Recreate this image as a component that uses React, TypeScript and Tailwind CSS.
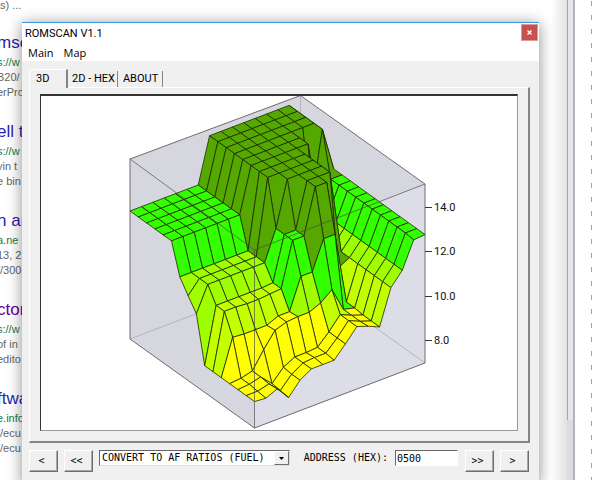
import { ReactNode } from "react";

const results = [
  { title: "msc", url: "s://w", lines: ["B20/", "erPro"], visited: false },
  { title: "ell t", url: "s://w", lines: ["yin t", "e bin"], visited: false },
  { title: "n ar", url: "a.ne", lines: ["13, 2", "//300"], visited: false },
  { title: "ctor", url: "s://w", lines: ["of in", "edito"], visited: true },
  { title: "ftwa", url: "e.info", lines: ["//ecu", "//ecu"], visited: false },
];

// Height of the surface at every grid point, one row per load line
const heights = [
  [128, 128, 128, 128, 128, 128, 128, 173, 173, 173, 173, 173, 173, 173, 173, 129],
  [128, 128, 128, 128, 128, 128, 128, 173, 173, 173, 173, 173, 173, 173, 173, 129],
  [128, 128, 128, 128, 128, 128, 128, 173, 173, 173, 173, 173, 173, 173, 173, 129],
  [128, 128, 128, 128, 128, 128, 128, 173, 173, 173, 173, 173, 173, 173, 173, 129],
  [128, 128, 128, 128, 128, 128, 128, 173, 173, 173, 173, 173, 173, 102, 173, 129],
  [128, 128, 128, 128, 128, 128, 128, 173, 173, 173, 173, 173, 173, 102, 129, 129],
  [98, 98, 98, 98, 98, 98, 98, 173, 173, 173, 173, 173, 89, 102, 129, 129],
  [85, 98, 98, 98, 98, 98, 98, 173, 173, 173, 173, 173, 89, 102, 129, 129],
  [73, 98, 98, 98, 98, 98, 98, 128, 173, 173, 173, 173, 89, 102, 129, 129],
  [27, 83, 83, 83, 83, 83, 84, 128, 128, 173, 173, 173, 89, 102, 129, 129],
  [27, 83, 83, 82, 82, 83, 84, 128, 128, 173, 173, 83, 89, 102, 129, 129],
  [27, 63, 62, 62, 62, 67, 67, 98, 98, 127, 127, 55, 89, 102, 129, 129],
  [27, 28, 31, 48, 63, 67, 68, 68, 73, 82, 58, 55, 89, 102, 129, 129],
  [27, 28, 31, 20, 32, 38, 38, 39, 50, 63, 58, 54, 89, 102, 129, 129],
  [27, 27, 30, 19, 31, 38, 39, 39, 50, 63, 58, 54, 89, 102, 129, 129],
  [27, 26, 31, 18, 31, 38, 38, 38, 50, 63, 59, 54, 89, 102, 128, 129],
];

const ticks = [
  { label: "14.0", y: 111 },
  { label: "12.0", y: 155 },
  { label: "10.0", y: 200 },
  { label: "8.0", y: 244 },
];

const project = (i: number, j: number) => [
  89 + i * 8.3 + j * 11.37,
  243 + i * 5.97 - j * 4.33 - heights[i][j],
];

const shade = (h: number) => {
  if (h > 150) return "#55a800";
  if (h > 110) return "#33ff00";
  if (h > 92) return "#9fff00";
  if (h > 75) return "#c4ff00";
  return "#ffff00";
};

function Surface() {
  const cells = [];
  for (let i = 0; i < 15; i++) {
    for (let j = 14; j >= 0; j--) {
      const corners = [[i, j], [i, j + 1], [i + 1, j + 1], [i + 1, j]];
      const top = Math.max(...corners.map(([a, b]) => heights[a][b]));
      cells.push(
        <polygon
          key={`${i}-${j}`}
          points={corners.map(([a, b]) => project(a, b).join(",")).join(" ")}
          fill={shade(top)}
        />
      );
    }
  }
  return <g stroke="#1c2a00" strokeWidth="0.8" strokeLinejoin="round">{cells}</g>;
}

function Plot() {
  return (
    <svg viewBox="0 0 476 334" className="block w-full h-auto bg-white" role="img" aria-label="3D map">
      <polygon points="89,63 259,-0.5 384,88 384,267 213.5,332 89,243" fill="#d6d6de" />
      <polygon points="213.5,154 384,88 384,267 213.5,332" fill="#dddde8" />
      <path d="M259.5 0V178M89 243L259.5 178L384 267" stroke="#b4b4b8" fill="none" />
      <path d="M89 63L259.5 -0.5L384 88V267L213.5 332L89 243Z" stroke="#6c6c70" fill="none" />
      <Surface />
      <path d="M89 63L213.5 154L384 88M213.5 154V332" stroke="#484848" strokeOpacity="0.65" fill="none" />
      {ticks.map((t) => (
        <g key={t.label}>
          <path d={`M384 ${t.y + 0.5}h7`} stroke="#333" />
          <text x="393" y={t.y + 4} fontSize="11" fontFamily="Roboto, sans-serif" fill="#111">
            {t.label}
          </text>
        </g>
      ))}
    </svg>
  );
}

function NavButton({ label, children }: { label: string; children: ReactNode }) {
  return (
    <button
      aria-label={label}
      className="w-[29px] h-[22px] shrink-0 border border-t-white border-l-white border-r-[#6e6e6e] border-b-[#6e6e6e] shadow-[inset_-1px_-1px_#a8a8a8] pr-1 text-[10px] leading-none"
    >
      {children}
    </button>
  );
}

export default function App() {
  return (
    <div className="relative h-screen overflow-hidden bg-white font-['Liberation_Sans',sans-serif]">
      <div className="flex h-full justify-between">
        <div className="-ml-[3px] w-6 whitespace-nowrap text-[11px] text-[#666]">
          <div className="h-8 pl-[3px] leading-[10px]">s) ...</div>
          {results.map((r, i) => (
            <div key={i} className="mb-[21px]">
              <a href="#" className={r.visited ? "block text-[17px] leading-[22px] text-[#609]" : "block text-[17px] leading-[22px] text-[#2a1fae]"}>
                {r.title}
              </a>
              <div className="leading-[16px] text-[#1a7a3c]">{r.url}</div>
              {r.lines.map((l, k) => (
                <div key={k} className="leading-[15px]">{l}</div>
              ))}
            </div>
          ))}
        </div>
        <div className="flex">
          <div className="w-4 bg-linear-to-r from-white to-[#e2e2e2]" />
          <div className="flex flex-col">
            <div className="h-[420px] w-[6px] border-l border-[#a6a6a8] bg-[#e6e6e8]" />
            <div className="flex-1 bg-[#dcdcde]" />
          </div>
          <div className="w-[2px] bg-[#b2b2ba]" />
          <div className="flex w-[17px] flex-col items-end gap-[9px] pt-px">
            {Array.from({ length: 35 }, (_, i) => (
              <div key={i} className="h-[5px] w-px shrink-0 bg-[#b78fc8]" />
            ))}
          </div>
        </div>
      </div>

      <div className="absolute top-[22px] right-[53px] -bottom-1 left-[22px] border-t border-[#3b98dc] bg-[#f0f0f0] text-black shadow-[0_2px_14px_rgba(0,0,0,0.45)]">
        <div className="bg-white text-[11px]">
          <div className="flex h-5 items-start justify-between pl-[3px] pr-px pt-px">
            <span className="font-['Roboto',sans-serif] leading-5">ROMSCAN V1.1</span>
            <button aria-label="Close" className="flex h-[17px] w-[17px] items-center justify-center border border-[#dc9a9a] bg-[#c75050]">
              <svg width="5" height="5" viewBox="0 0 5 5" stroke="#fff" strokeWidth="1.3">
                <path d="M0.5 0.5L4.5 4.5M4.5 0.5L0.5 4.5" />
              </svg>
            </button>
          </div>
          <div className="flex h-[18px] gap-[10px] pl-[6px] font-['Open_Sans',sans-serif]">
            <button className="leading-5">Main</button>
            <button className="leading-5">Map</button>
          </div>
        </div>

        <div className="pt-2 pr-[9px] pl-[7px]">
          <div className="flex items-end font-['Roboto',sans-serif] text-[11px]">
            <button className="relative -mb-px h-[19px] w-[39px] rounded-tl-sm border-t border-r-2 border-l border-t-white border-l-white border-r-[#848484] bg-[#f0f0f0] pl-[6px] text-left">3D</button>
            <button className="mr-1 h-[16px] border-r border-[#848484] pr-[2px] pl-1 leading-[16px]">2D - HEX</button>
            <button className="h-[16px] border-r border-[#848484] pr-1 pl-px leading-[16px]">ABOUT</button>
          </div>
          <div className="border border-t-white border-r-2 border-b-2 border-l-white border-r-[#848484] border-b-[#848484] px-[10px] pt-[6px] pb-[10px]">
            <div className="border border-t-2 border-t-[#333] border-r-[#999] border-b-[#999] border-l-[#333]">
              <Plot />
            </div>
          </div>

          <div className="flex items-start pt-[7px] pr-px font-['DejaVu_Sans_Mono',monospace] text-[10px]">
            <div className="flex gap-[6px]">
              <NavButton label="Back one">&lt;</NavButton>
              <NavButton label="Back one page">&lt;&lt;</NavButton>
            </div>
            <div className="relative mx-[6px] h-4 flex-1">
              <select
                aria-label="Conversion"
                className="h-4 w-full appearance-none border border-t-[#666] border-r-[#ddd] border-b-[#ddd] border-l-[#666] bg-white pl-[2px] leading-[14px]"
              >
                <option>CONVERT TO AF RATIOS (FUEL)</option>
              </select>
              <span className="pointer-events-none absolute top-px right-px flex h-[14px] w-[15px] items-center justify-center border border-t-white border-r-[#6e6e6e] border-b-[#6e6e6e] border-l-white bg-[#f0f0f0]">
                <svg width="5" height="3" viewBox="0 0 5 3">
                  <path d="M0 0H5L2.5 3Z" />
                </svg>
              </span>
            </div>
            <label htmlFor="address" className="pr-[7px] pl-2 leading-4">ADDRESS (HEX):</label>
            <input
              id="address"
              defaultValue="0500"
              className="mr-[7px] h-4 w-[63px] border border-t-[#666] border-r-white border-b-white border-l-[#666] bg-white px-px"
            />
            <div className="flex gap-[6px]">
              <NavButton label="Forward one page">&gt;&gt;</NavButton>
              <NavButton label="Forward one">&gt;</NavButton>
            </div>
          </div>
        </div>
      </div>
    </div>
  );
}
